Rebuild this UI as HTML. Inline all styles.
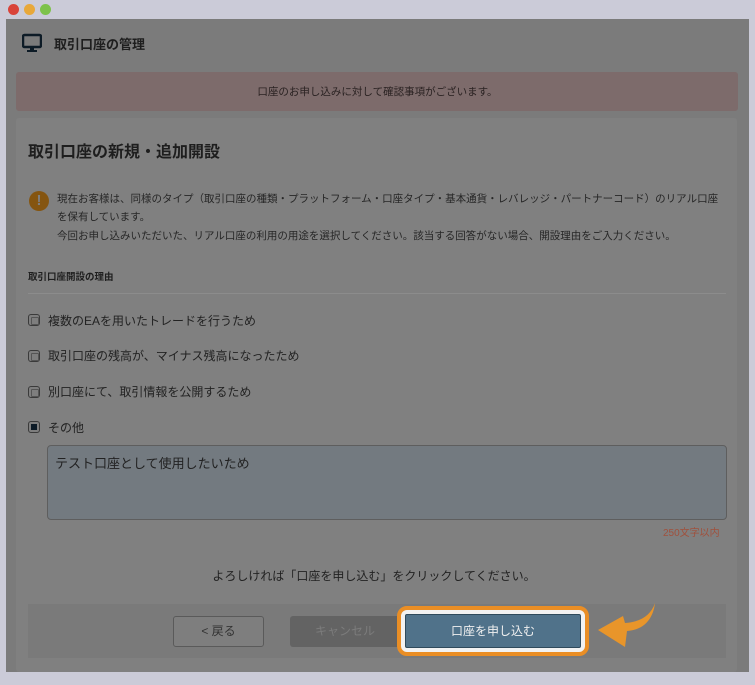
<!DOCTYPE html>
<html><head><meta charset="utf-8"><style>
*{margin:0;padding:0;box-sizing:border-box}
body{width:755px;height:685px;background:#cbcbd8;position:relative;overflow:hidden;font-family:"Liberation Sans","Noto Sans CJK JP",sans-serif;color:#222}
.a{position:absolute}
.dot{position:absolute;top:4px;width:11px;height:11px;border-radius:50%}
.win{left:6px;top:19px;width:743px;height:653px;background:#7b7b7b}
.t{white-space:nowrap}
.cb{position:absolute;left:28px;width:12px;height:12px;border:1px solid #3a3a3a;border-radius:3px;background:#7e7e7e}
.cb::after{content:"";position:absolute;left:2px;top:2px;width:6px;height:6px;border:1px solid #555;border-radius:1px}
.lbl{position:absolute;left:48px;font-size:12px;color:#222}
</style></head><body>
<div class="dot" style="left:8px;background:#d9433a"></div>
<div class="dot" style="left:24px;background:#e8a83a"></div>
<div class="dot" style="left:40px;background:#7dc24a"></div>
<div class="a win"></div>
<svg class="a" style="left:22px;top:33px" width="20" height="20" viewBox="0 0 20 20"><rect x="1" y="2" width="18" height="12" rx="1.5" fill="none" stroke="#0d1b26" stroke-width="2.5"/><rect x="8" y="14" width="4" height="3" fill="#0d1b26"/><rect x="5" y="17" width="10" height="2" fill="#0d1b26"/></svg>
<div class="a t" style="left:54px;top:34px;font-size:13px;font-weight:bold;color:#1e1e1e">取引口座の管理</div>
<div class="a" style="left:16px;top:72px;width:722px;height:39px;background:#7d6b6b;border-radius:3px"></div>
<div class="a t" style="left:0;width:755px;text-align:center;top:84px;font-size:10.5px;color:#2a2222">口座のお申し込みに対して確認事項がございます。</div>
<div class="a" style="left:16px;top:118px;width:721px;height:554px;background:#808080;border-radius:3px"></div>
<div class="a t" style="left:28px;top:138px;font-size:16px;font-weight:bold;color:#1e1e1e">取引口座の新規・追加開設</div>
<div class="a" style="left:29px;top:191px;width:20px;height:20px;border-radius:50%;background:#855510;color:#7e7e7e;font-weight:bold;font-size:15px;text-align:center;line-height:20px">!</div>
<div class="a" style="left:57px;top:190px;font-size:10.5px;line-height:18px;color:#262626;width:668px">現在お客様は、同様のタイプ（取引口座の種類・プラットフォーム・口座タイプ・基本通貨・レバレッジ・パートナーコード）のリアル口座を保有しています。</div>
<div class="a t" style="left:57px;top:228px;font-size:10.5px;color:#262626">今回お申し込みいただいた、リアル口座の利用の用途を選択してください。該当する回答がない場合、開設理由をご入力ください。</div>
<div class="a t" style="left:28px;top:269px;font-size:9.5px;font-weight:bold;color:#1e1e1e">取引口座開設の理由</div>
<div class="a" style="left:28px;top:293px;width:698px;height:1px;background:#8c8c8c"></div>
<div class="cb" style="top:314px"></div><div class="lbl" style="top:312px">複数のEAを用いたトレードを行うため</div>
<div class="cb" style="top:350px"></div><div class="lbl" style="top:347px">取引口座の残高が、マイナス残高になったため</div>
<div class="cb" style="top:386px"></div><div class="lbl" style="top:383px">別口座にて、取引情報を公開するため</div>
<div class="a" style="left:28px;top:421px;width:12px;height:12px;border:1px solid #3a3a3a;border-radius:3px;background:#7e7e7e"><div style="margin:2px;width:6px;height:6px;background:#0c1a26"></div></div>
<div class="lbl" style="top:419px">その他</div>
<div class="a" style="left:47px;top:445px;width:680px;height:75px;background:#737a80;border:1px solid #5e5e5e;border-radius:4px"></div>
<div class="a t" style="left:55px;top:453px;font-size:13px;color:#222">テスト口座として使用したいため</div>
<div class="a t" style="left:663px;top:524px;font-size:10px;color:#a0503c">250文字以内</div>
<div class="a t" style="left:0;width:748px;text-align:center;top:567px;font-size:12px;color:#222">よろしければ「口座を申し込む」をクリックしてください。</div>
<div class="a" style="left:28px;top:604px;width:698px;height:54px;background:#7a7a7a"></div>
<div class="a" style="left:173px;top:616px;width:91px;height:31px;border:1px solid #5a5a5a;border-radius:3px;background:#7e7e7e;text-align:center;line-height:29px;font-size:12px;color:#333">&lt; 戻る</div>
<div class="a" style="left:290px;top:616px;width:110px;height:31px;border-radius:3px;background:#636363;text-align:center;line-height:31px;font-size:12px;color:#7c7c7c">キャンセル</div>
<div class="a" style="left:397px;top:606px;width:192px;height:50px;border:4px solid #ea8e25;border-radius:10px;background:#f2f2f2"></div>
<div class="a" style="left:405px;top:614px;width:176px;height:34px;background:#50728a;border-radius:2px;border:1px solid #2f4a5c;text-align:center;line-height:32px;font-size:12px;color:#f0f0f0">口座を申し込む</div>
<svg class="a" style="left:595px;top:600px" width="62" height="50" viewBox="0 0 62 50"><path d="M60 3 C58 20 48 30 32 31 L30 47 L3 30 L28 16 L30 23 C46 22 56 15 60 3 Z" fill="#e8952a"/></svg>
</body></html>
